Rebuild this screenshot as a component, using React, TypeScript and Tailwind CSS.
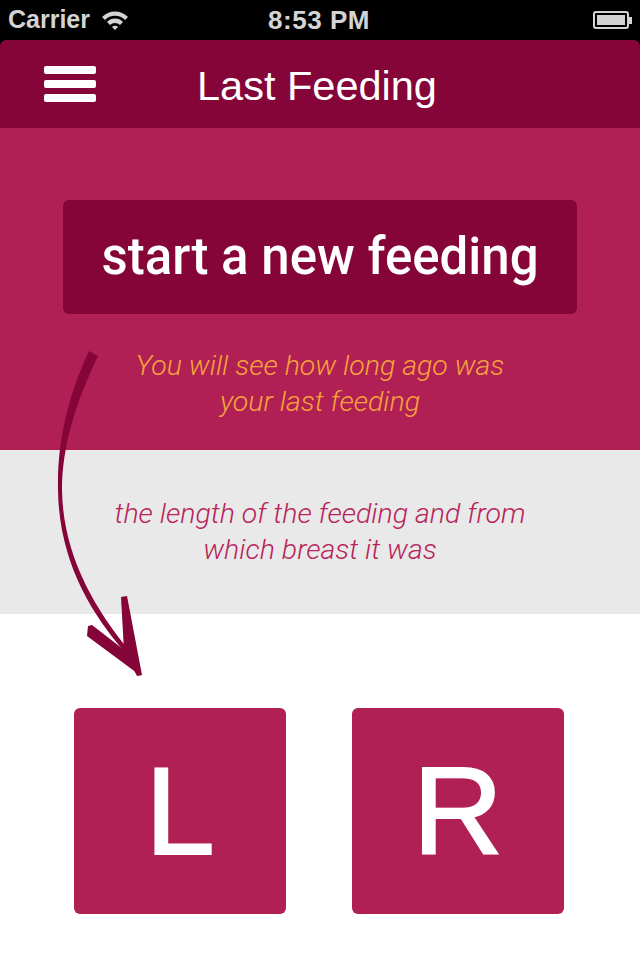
import { useState } from "react";

const Arrow = () => (
  <svg
    className="absolute left-0 top-0 pointer-events-none"
    width="640"
    height="960"
    viewBox="0 0 640 960"
  >
    {/* tapered shaft */}
    <path
      d="M89 351 C 69 394, 57 440, 58 490 C 59 560, 90 612, 124 651 L127 648 C 95 608, 63 556, 62 490 C 62 446, 76 402, 98 356 Z"
      fill="#850538"
    />
    {/* sketchy head */}
    <path d="M121 597 L127 596 L142 675 L137 676 L124 651 Z" fill="#850538" />
    <path d="M88 626 L92 625 L132 656 L141 676 L87 636 Z" fill="#850538" />
  </svg>
);

const StatusBar = () => (
  <div className="h-[40px] bg-black flex items-center justify-between px-[8px] text-[#d4d4d4] font-bold text-[25px] relative">
    <div className="flex items-center gap-[10px]">
      <span>Carrier</span>
      <svg width="30" height="22" viewBox="0 0 30 22">
        <path d="M2 8 A18 18 0 0 1 28 8 L25 11 A14 14 0 0 0 5 11 Z" fill="#d4d4d4" />
        <path d="M7 13 A11 11 0 0 1 23 13 L20 16 A7 7 0 0 0 10 16 Z" fill="#d4d4d4" />
        <path d="M12 18 A4 4 0 0 1 18 18 L15 21 Z" fill="#d4d4d4" />
      </svg>
    </div>
    <span className="absolute left-[319px] -translate-x-1/2 top-[1px] text-[26px] tracking-[0.5px]">
      8:53 PM
    </span>
    <div className="flex items-center">
      <div className="w-[36px] h-[18px] border-[2px] border-[#d4d4d4] rounded-[3px] p-[2px]">
        <div className="w-full h-full bg-[#d4d4d4]" />
      </div>
      <div className="w-[3px] h-[7px] bg-[#d4d4d4]" />
    </div>
  </div>
);

export default function App() {
  const [side, setSide] = useState<"L" | "R" | null>(null);

  return (
    <div
      className="relative w-[640px] h-[960px] bg-white overflow-hidden"
      style={{ fontFamily: '"Liberation Sans", Arial, sans-serif' }}
    >
      <StatusBar />
      <div className="bg-black">
        <div className="h-[88px] bg-[#850538] rounded-t-[6px] flex items-center relative">
          <div className="ml-[44px] flex flex-col gap-[6px]">
            <div className="w-[52px] h-[8px] bg-white rounded-[2px]" />
            <div className="w-[52px] h-[8px] bg-white rounded-[2px]" />
            <div className="w-[52px] h-[8px] bg-white rounded-[2px]" />
          </div>
          <h1 className="absolute left-[197px] top-[22px] text-white text-[41.5px] leading-[48px]">
            Last Feeding
          </h1>
        </div>
      </div>

      <div className="h-[322px] bg-[#b02054] flex flex-col items-center pt-[72px]">
        <button
          className="w-[514px] h-[114px] bg-[#850538] rounded-[6px] text-white text-[51px] font-medium"
          style={{ fontFamily: "Roboto, sans-serif" }}
        >
          start a new feeding
        </button>
        <p
          className="mt-[34px] text-[#f7a33c] text-[28.5px] leading-[36px] italic font-light text-center"
          style={{ fontFamily: "Roboto, sans-serif" }}
        >
          You will see how long ago was
          <br />
          your last feeding
        </p>
      </div>

      <div className="h-[164px] bg-[#e9e9e9] flex justify-center pt-[46px]">
        <p
          className="text-[#b8245a] text-[28.5px] leading-[36px] italic font-light text-center"
          style={{ fontFamily: "Roboto, sans-serif" }}
        >
          the length of the feeding and from
          <br />
          which breast it was
        </p>
      </div>

      <div className="flex justify-center gap-[66px] pt-[94px] pr-[2px]">
        {(["L", "R"] as const).map((s) => (
          <button
            key={s}
            onClick={() => setSide(s)}
            className={
              "w-[212px] h-[206px] rounded-[6px] flex items-center justify-center text-white text-[125px] [-webkit-text-stroke:2px_white] " +
              (side === s ? "bg-[#850538]" : "bg-[#b02054]")
            }
          >
            {s}
          </button>
        ))}
      </div>

      <Arrow />
    </div>
  );
}
